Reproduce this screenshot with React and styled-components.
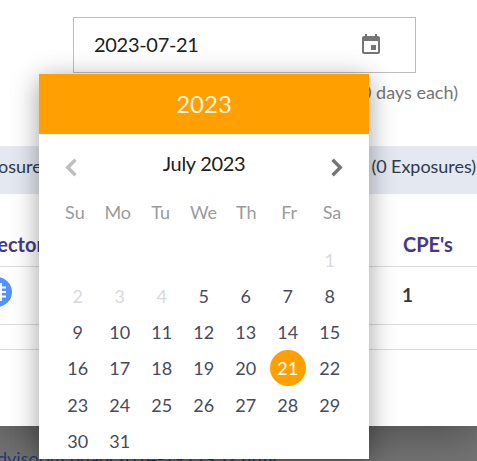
import React from "react";
import styled, { createGlobalStyle } from "styled-components";

const Global = createGlobalStyle`
  * { box-sizing: border-box; }
  body { margin: 0; overflow: hidden; font-family: Lato, sans-serif; }
`;

const Page = styled.div`
  position: relative;
  width: 477px;
  height: 461px;
  overflow: hidden;
  background: #747474;
`;

const Modal = styled.main`
  height: 426px;
  padding-top: 17px;
  background: #fff;
  box-shadow: 0 10px 40px rgba(0, 0, 0, 0.32);
`;

const DateField = styled.div`
  display: flex;
  align-items: center;
  justify-content: space-between;
  width: 343px;
  height: 56px;
  margin-left: 73px;
  padding: 0 32px 0 20px;
  border: 1px solid #bdbdbd;
  color: #212121;
  font-size: 20px;
  letter-spacing: -0.3px;
`;

const DateValue = styled.span`
  padding-bottom: 2px;
`;

const CalendarIcon = styled.svg`
  width: 24px;
  height: 24px;
  fill: #757575;
`;

const Hint = styled.p`
  height: 73px;
  margin: 0;
  padding: 8px 19px 0 0;
  color: #757575;
  font-size: 18px;
  line-height: 22px;
  text-align: right;
`;

const ExposureBar = styled.div`
  display: flex;
  justify-content: space-between;
  height: 48px;
  padding-top: 9px;
  background: #e4e8f1;
  color: #303a4c;
  font-size: 18px;
  line-height: 22px;
  white-space: nowrap;
`;

const ExposureCount = styled.span`
  letter-spacing: -0.05px;
  margin-right: 1px;
`;

const Shifted = styled.span`
  margin-left: ${(p) => p.$x}px;
`;

const TableRow = styled.div`
  display: grid;
  grid-template-columns: 403px 1fr;
  align-items: ${(p) => p.$align || "center"};
  height: ${(p) => p.$height}px;
  border-bottom: 1px solid #dcdcdc;
`;

const ColumnTitle = styled.span`
  margin-left: ${(p) => p.$x || 0}px;
  padding-bottom: 10px;
  color: #473788;
  font-size: 20px;
  font-weight: 700;
  line-height: 24px;
`;

const Count = styled.span`
  margin: 0 0 2px -1px;
  color: #303a4c;
  font-size: 19px;
  font-weight: 700;
`;

const VectorIcon = styled.svg`
  width: 30px;
  height: 30px;
  margin: 0 0 8px -18px;
`;

const Advisory = styled.div`
  position: relative;
  padding-top: 21px;
  color: #233a70;
  font-size: 18px;
  line-height: 22px;
  white-space: nowrap;
`;

const Popover = styled.section`
  position: absolute;
  left: 39px;
  top: 74px;
  width: 330px;
  height: 385px;
  background: #fff;
  box-shadow: 0 5px 25px rgba(0, 0, 0, 0.38);
`;

const YearHeader = styled.header`
  height: 60px;
  background: #ffa000;
  color: rgba(255, 255, 255, 0.9);
  font-size: 24px;
  line-height: 60px;
  text-align: center;
`;

const MonthBar = styled.div`
  display: flex;
  align-items: center;
  justify-content: space-between;
  height: 60px;
  padding: 6px 15px 0 15px;
  color: #212121;
  font-size: 20px;
  letter-spacing: -0.3px;
`;

const MonthTitle = styled.span`
  padding-bottom: 8px;
`;

const Arrow = styled.svg`
  width: 35px;
  height: 35px;
  fill: none;
  stroke: ${(p) => (p.$muted ? "#bdbdbd" : "#757575")};
  stroke-width: 2.3;
`;

const Weekdays = styled.div`
  display: grid;
  grid-template-columns: repeat(7, 42.85px);
  height: 48px;
  margin-left: 14.5px;
  color: #9b9b9b;
  font-size: 18px;
  line-height: 37px;
  text-align: center;
`;

const Days = styled.div`
  display: grid;
  grid-template-columns: repeat(7, 42px);
  grid-auto-rows: 36.15px;
  justify-items: center;
  margin-left: 17.7px;
`;

const Day = styled.span`
  grid-column-start: ${(p) => p.$column || "auto"};
  width: 36px;
  height: 36px;
  border-radius: 50%;
  background: ${(p) => (p.$selected ? "#ffa000" : "transparent")};
  color: ${(p) => (p.$selected ? "#fff" : p.$disabled ? "#d8d9dd" : "#474b5b")};
  font-size: 18px;
  line-height: 36px;
  text-align: center;
`;

const weekdays = ["Su", "Mo", "Tu", "We", "Th", "Fr", "Sa"];
const days = Array.from({ length: 31 }, (_, i) => i + 1);

export default function App() {
  return (
    <Page>
      <Global />
      <Modal>
        <DateField>
          <DateValue>2023-07-21</DateValue>
          <CalendarIcon viewBox="0 0 24 24">
            <path d="M17 12h-5v5h5v-5zM16 1v2H8V1H6v2H5c-1.11 0-1.99.9-1.99 2L3 19c0 1.1.89 2 2 2h14c1.1 0 2-.9 2-2V5c0-1.1-.9-2-2-2h-1V1h-2zm3 18H5V8h14v11z" />
          </CalendarIcon>
        </DateField>
        <Hint>(30 days each)</Hint>
        <ExposureBar>
          <Shifted $x={-12}>posures</Shifted>
          <ExposureCount>(0 Exposures)</ExposureCount>
        </ExposureBar>
        <TableRow $height={73} $align="end">
          <ColumnTitle $x={-15}>Vector</ColumnTitle>
          <ColumnTitle>CPE's</ColumnTitle>
        </TableRow>
        <TableRow $height={58}>
          <VectorIcon viewBox="0 0 30 30">
            <circle cx="15" cy="15" r="15" fill="#5591ff" />
            <path d="M10 6v18M19 6v18M6 10.5h18M6 15h18M6 19.5h18" stroke="#fff" strokeWidth="1.8" />
          </VectorIcon>
          <Count>1</Count>
        </TableRow>
        <TableRow $height={25} />
      </Modal>
      <Advisory>
        <Shifted $x={-12}>advisory/cpuapr2014-1972952.html</Shifted>
      </Advisory>
      <Popover>
        <YearHeader>2023</YearHeader>
        <MonthBar>
          <Arrow viewBox="0 0 24 24" $muted>
            <path d="M14.7 6.7L9.4 12l5.3 5.3" />
          </Arrow>
          <MonthTitle>July 2023</MonthTitle>
          <Arrow viewBox="0 0 24 24">
            <path d="M9.3 6.7l5.3 5.3-5.3 5.3" />
          </Arrow>
        </MonthBar>
        <Weekdays>
          {weekdays.map((name) => <span key={name}>{name}</span>)}
        </Weekdays>
        <Days>
          {days.map((day) => (
            <Day key={day} $column={day === 1 ? 7 : undefined} $disabled={day < 5} $selected={day === 21}>
              {day}
            </Day>
          ))}
        </Days>
      </Popover>
    </Page>
  );
}
